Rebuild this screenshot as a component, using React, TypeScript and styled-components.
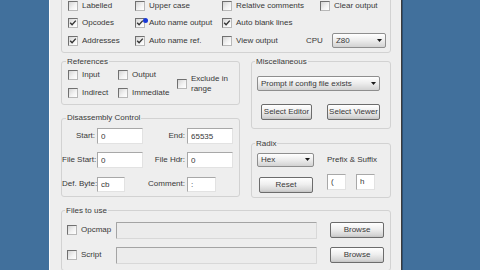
import React from "react";
import styled, { createGlobalStyle, css } from "styled-components";

const Global = createGlobalStyle`
  html, body { margin: 0; padding: 0; background: #41709c; }
  body { font-family: "Liberation Sans", Arial, sans-serif; font-size: 8px; color: #383838; }
  * { box-sizing: border-box; }
`;

const Screen = styled.div`
  width: 480px;
  height: 270px;
  overflow: hidden;
  background: #41709c;
  display: flex;
  padding-left: 49px;
`;

const Dialog = styled.div`
  width: 353px;
  height: 300px;
  background: #eeeeee;
  border-left: 1px solid #fbfbfb;
  border-right: 1px solid #3c3c3c;
  box-shadow: 1px 0 0 #2d5073;
  padding: 0 10px 0 11px;
  display: flex;
  flex-direction: column;
`;

const OptionsGroup = styled.div`
  margin-top: -10px;
  border: 1px solid #d2d2d2;
  border-radius: 3px;
  padding: 6px 0 2px 6px;
  display: grid;
  grid-template-columns: 67px 87px 84px 1fr;
  grid-auto-rows: 17.5px;
  align-items: center;
`;

const Item = styled.label<{ $indent?: number; $span?: number }>`
  display: flex;
  align-items: center;
  gap: 4px;
  white-space: nowrap;
  line-height: 10px;
  padding-left: ${(p) => p.$indent ?? 0}px;
  ${(p) =>
    p.$span &&
    css`
      grid-row: span ${p.$span};
    `}
`;

const Box = styled.span<{ $dot?: boolean }>`
  position: relative;
  flex: none;
  width: 10px;
  height: 10px;
  border: 1px solid;
  border-color: #707070 #b8b8b8 #b8b8b8 #707070;
  background: linear-gradient(135deg, #d4d4d4 0%, #f2f2f2 55%, #ffffff 100%);
  display: flex;
  align-items: center;
  justify-content: center;
  ${(p) =>
    p.$dot &&
    css`
      &::after {
        content: "";
        position: absolute;
        left: 7px;
        top: -1px;
        width: 5px;
        height: 5px;
        border-radius: 50%;
        background: #1838d6;
      }
    `}
`;

const TwoLines = styled.span`
  display: flex;
  flex-direction: column;
  line-height: 10px;
`;

function Check({
  label,
  checked,
  dot,
  indent,
  span,
}: {
  label: React.ReactNode;
  checked?: boolean;
  dot?: boolean;
  indent?: number;
  span?: number;
}) {
  return (
    <Item $indent={indent} $span={span}>
      <Box $dot={dot}>
        {checked && (
          <svg width="8" height="8" viewBox="0 0 8 8">
            <path d="M1.2 3.8 L3.1 5.8 L6.8 1.6" fill="none" stroke="#333333" strokeWidth="1.4" />
          </svg>
        )}
      </Box>
      <span>{label}</span>
    </Item>
  );
}

const CpuCell = styled.div`
  display: flex;
  align-items: center;
  gap: 9px;
`;

const SelectBox = styled.div<{ $w: number; $h: number }>`
  width: ${(p) => p.$w}px;
  height: ${(p) => p.$h}px;
  display: flex;
  align-items: center;
  border: 1px solid #8e8e8e;
  border-radius: 2px;
  background: linear-gradient(#ffffff 0%, #ececec 50%, #d2d2d2 100%);
`;

const SelectText = styled.span`
  flex: 1;
  padding-left: 3px;
  white-space: nowrap;
  overflow: hidden;
  line-height: 10px;
`;

const SelectArrow = styled.span`
  width: 11px;
  display: flex;
  align-items: center;
  justify-content: center;
`;

function Select({ w, h, value }: { w: number; h: number; value: string }) {
  return (
    <SelectBox $w={w} $h={h}>
      <SelectText>{value}</SelectText>
      <SelectArrow>
        <svg width="5" height="3" viewBox="0 0 5 3">
          <path d="M0 0 L5 0 L2.5 3 Z" fill="#1a1a1a" />
        </svg>
      </SelectArrow>
    </SelectBox>
  );
}

const Columns = styled.div`
  display: grid;
  grid-template-columns: 179px 1fr;
  column-gap: 11px;
  margin-top: 4px;
  align-items: start;
`;

const Stack = styled.div<{ $gap: number }>`
  display: flex;
  flex-direction: column;
  gap: ${(p) => p.$gap}px;
`;

const Group = styled.fieldset<{ $pt: number; $pb: number; $pl: number }>`
  margin: 0;
  min-width: 0;
  border: 1px solid #d2d2d2;
  border-radius: 3px;
  padding: ${(p) => p.$pt}px 3px ${(p) => p.$pb}px ${(p) => p.$pl}px;
`;

const Legend = styled.legend<{ $ml?: number }>`
  padding: 0 1px;
  margin-left: ${(p) => p.$ml ?? -2}px;
  line-height: 10px;
  font-size: 8px;
  color: #3a3a3a;
`;

const RefGrid = styled.div`
  display: grid;
  grid-template-columns: 50px 59px 1fr;
  grid-template-rows: 17px 17px;
  row-gap: 1px;
  align-items: center;
`;

const FieldGrid = styled.div`
  display: grid;
  grid-template-columns: 33px 46px 40px 46px;
  grid-auto-rows: 16px;
  column-gap: 2px;
  row-gap: 8px;
  align-items: center;
`;

const FieldLabel = styled.span`
  text-align: right;
  white-space: nowrap;
  line-height: 10px;
`;

const Input = styled.input<{ $w?: number; $h?: number }>`
  width: ${(p) => (p.$w ? `${p.$w}px` : "100%")};
  height: ${(p) => p.$h ?? 16}px;
  margin: 0;
  padding: 0 0 0 3px;
  font-family: "Liberation Sans", Arial, sans-serif;
  font-size: 8px;
  color: #383838;
  background: #ffffff;
  border: 1px solid;
  border-color: #a8a8a8 #e2e2e2 #e2e2e2 #a8a8a8;
  outline: none;
`;

const MiscBody = styled.div`
  display: flex;
  flex-direction: column;
  gap: 13px;
`;

const ButtonRow = styled.div`
  display: flex;
  justify-content: space-between;
  padding-left: 4px;
  width: 123px;
`;

const Button = styled.button<{ $w: number; $h?: number; $ml?: number }>`
  width: ${(p) => p.$w}px;
  height: ${(p) => p.$h ?? 16}px;
  margin: 0 0 0 ${(p) => p.$ml ?? 0}px;
  padding: 0;
  font-family: "Liberation Sans", Arial, sans-serif;
  font-size: 8px;
  color: #383838;
  border: 1px solid #6c6c6c;
  border-radius: 2px;
  background: linear-gradient(#ffffff 0%, #efefef 45%, #d6d6d6 85%, #c4c4c4 100%);
  line-height: 10px;
`;

const RadixBody = styled.div`
  display: flex;
  padding-top: 4px;
`;

const RadixLeft = styled.div`
  display: flex;
  flex-direction: column;
  gap: 10px;
  width: 57px;
`;

const RadixRight = styled.div`
  margin-left: 13px;
  display: flex;
  flex-direction: column;
  gap: 9px;
  padding-top: 2px;
`;

const AffixRow = styled.div`
  display: flex;
  gap: 10px;
`;

const Plain = styled.span`
  white-space: nowrap;
  line-height: 10px;
`;

const FilesGroup = styled(Group)`
  margin-top: 8px;
`;

const FilesGrid = styled.div`
  display: grid;
  grid-template-columns: 36px 201px 54px;
  grid-auto-rows: 17px;
  column-gap: 13px;
  row-gap: 8px;
  align-items: center;
`;

const PathBox = styled.div`
  height: 17px;
  background: #ececec;
  border: 1px solid;
  border-color: #a4a4a4 #d8d8d8 #d8d8d8 #a4a4a4;
  border-radius: 1px;
`;

export default function App() {
  return (
    <>
      <Global />
      <Screen>
        <Dialog>
          <OptionsGroup>
            <Check label="Labelled" />
            <Check label="Upper case" />
            <Check label="Relative comments" />
            <Check label="Clear output" indent={14} />
            <Check label="Opcodes" checked />
            <Check label="Auto name output" checked dot />
            <Check label="Auto blank lines" checked />
            <span />
            <Check label="Addresses" checked />
            <Check label="Auto name ref." checked />
            <Check label="View output" />
            <CpuCell>
              <Plain>CPU</Plain>
              <Select w={54} h={15} value="Z80" />
            </CpuCell>
          </OptionsGroup>

          <Columns>
            <Stack $gap={8.5}>
              <Group $pt={0} $pb={2} $pl={6}>
                <Legend>References</Legend>
                <RefGrid>
                  <Check label="Input" />
                  <Check label="Output" />
                  <Check
                    span={2}
                    label={
                      <TwoLines>
                        <span>Exclude in</span>
                        <span>range</span>
                      </TwoLines>
                    }
                  />
                  <Check label="Indirect" />
                  <Check label="Immediate" />
                </RefGrid>
              </Group>
              <Group $pt={5} $pb={4} $pl={0}>
                <Legend $ml={4}>Disassembly Control</Legend>
                <FieldGrid>
                  <FieldLabel>Start:</FieldLabel>
                  <Input readOnly defaultValue="0" />
                  <FieldLabel>End:</FieldLabel>
                  <Input readOnly defaultValue="65535" />
                  <FieldLabel>File Start:</FieldLabel>
                  <Input readOnly defaultValue="0" />
                  <FieldLabel>File Hdr:</FieldLabel>
                  <Input readOnly defaultValue="0" />
                  <FieldLabel>Def. Byte:</FieldLabel>
                  <Input readOnly defaultValue="cb" $w={28} $h={15} />
                  <FieldLabel>Comment:</FieldLabel>
                  <Input readOnly defaultValue=":" $w={29} $h={15} />
                </FieldGrid>
              </Group>
            </Stack>

            <Stack $gap={9.5}>
              <Group $pt={9.5} $pb={8} $pl={5}>
                <Legend>Miscellaneous</Legend>
                <MiscBody>
                  <Select w={123} h={15} value="Prompt if config file exists" />
                  <ButtonRow>
                    <Button $w={51}>Select Editor</Button>
                    <Button $w={53}>Select Viewer</Button>
                  </ButtonRow>
                </MiscBody>
              </Group>
              <Group $pt={0} $pb={4} $pl={5}>
                <Legend>Radix</Legend>
                <RadixBody>
                  <RadixLeft>
                    <Select w={57} h={14} value="Hex" />
                    <Button $w={54} $ml={2}>
                      Reset
                    </Button>
                  </RadixLeft>
                  <RadixRight>
                    <Plain>Prefix &amp; Suffix</Plain>
                    <AffixRow>
                      <Input readOnly defaultValue="(" $w={19} />
                      <Input readOnly defaultValue="h" $w={19} />
                    </AffixRow>
                  </RadixRight>
                </RadixBody>
              </Group>
            </Stack>
          </Columns>

          <FilesGroup $pt={6} $pb={6} $pl={5}>
            <Legend>Files to use</Legend>
            <FilesGrid>
              <Check label="Opcmap" />
              <PathBox />
              <Button $w={54}>Browse</Button>
              <Check label="Script" />
              <PathBox />
              <Button $w={54}>Browse</Button>
            </FilesGrid>
          </FilesGroup>
        </Dialog>
      </Screen>
    </>
  );
}
